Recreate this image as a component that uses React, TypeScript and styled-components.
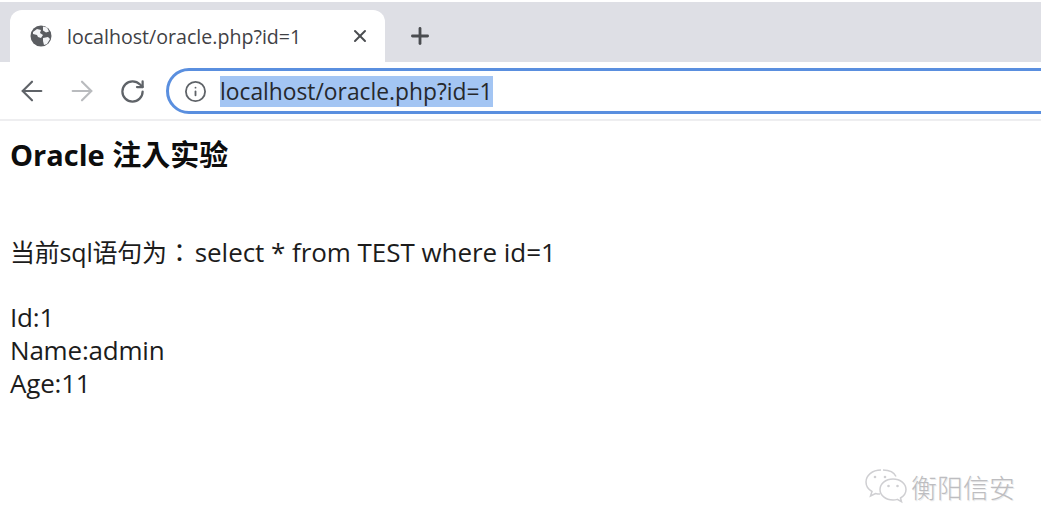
import React from 'react';
import styled, { createGlobalStyle } from 'styled-components';
import { ArrowLeft, ArrowRight, Info, Plus, RotateCw, X } from 'lucide-react';

const GlobalStyle = createGlobalStyle`
  html, body {
    margin: 0;
    padding: 0;
    background: #fff;
    overflow: hidden;
  }
  body {
    font-family: "Open Sans", "Noto Sans CJK TC", sans-serif;
  }
`;

const GlobeIcon = () => (
  <svg width="22" height="22" viewBox="0 0 22 22">
    <circle cx="11" cy="11" r="10.5" fill="#5b5d61" />
    <path
      d="M3 7l4-3 4 1-1 3 3 2-2 3-3-1-1-2-4-1zM13 1.500l4 1 2 4-3 1-3-2zM13 13l5-1 2 2-3 5-3 1-1-4z"
      fill="#f4f5f7"
    />
  </svg>
);

const WeChatIcon = () => (
  <svg width="44" height="38" viewBox="0 0 44 38" fill="none" stroke="#cfcfd2" strokeWidth="1.5">
    <path d="M17 2C8 2 2 7.500 2 14c0 4 2.500 7.500 6 9.500L6.500 28l5-2.500c1.500.4 3 .6 4.500.6" />
    <path d="M32 8.500c-1.800-4-7-6.500-13-6.500" />
    <path d="M29 11c-7.500 0-13 4.800-13 10.500S21.500 32 29 32c1.500 0 3-.2 4.300-.6l4.200 2.300-1-3.700c3.500-2 5.500-5 5.500-8.500C42 15.800 36.500 11 29 11z" />
    <circle cx="11" cy="9" r="1.300" fill="#cfcfd2" stroke="none" />
    <circle cx="21" cy="9" r="1.300" fill="#cfcfd2" stroke="none" />
    <circle cx="24.500" cy="18" r="1.300" fill="#cfcfd2" stroke="none" />
    <circle cx="33.500" cy="18" r="1.300" fill="#cfcfd2" stroke="none" />
  </svg>
);

const App: React.FC = () => {
  return (
    <Page>
      <GlobalStyle />
      <TabStrip>
        <Tab>
          <GlobeIcon />
          <TabTitle>localhost/oracle.php?id=1</TabTitle>
          <X size={20} strokeWidth={2.4} color="#4a4c50" />
        </Tab>
        <NewTab>
          <Plus size={26} strokeWidth={2.6} color="#4a4c50" />
        </NewTab>
      </TabStrip>
      <Toolbar>
        <NavButtons>
          <ArrowLeft size={32} strokeWidth={1.6} color="#5f6368" />
          <ArrowRight size={32} strokeWidth={1.6} color="#b9bbbe" />
          <ReloadIcon size={27} strokeWidth={2} color="#5f6368" />
        </NavButtons>
        <Omnibox>
          <Info size={23} strokeWidth={1.9} color="#5f6368" />
          <Url>localhost/oracle.php?id=1</Url>
        </Omnibox>
      </Toolbar>
      <Content>
        <Heading>Oracle 注入实验</Heading>
        <Query>
          <QueryLabel>当前sql语句为：</QueryLabel>select * from TEST where id=1
        </Query>
        <Result>
          <div>Id:1</div>
          <div>Name:admin</div>
          <div>Age:11</div>
        </Result>
      </Content>
      <Watermark>
        <WeChatIcon />
        <WatermarkText>衡阳信安</WatermarkText>
      </Watermark>
    </Page>
  );
};

const Page = styled.div`
  position: relative;
  box-sizing: border-box;
  width: 1041px;
  height: 511px;
  padding-top: 2px;
  overflow: hidden;
  background: #fff;
  color: #111;
`;

const TabStrip = styled.div`
  display: flex;
  align-items: flex-end;
  height: 60px;
  padding-left: 10px;
  background: #dedfe5;
`;

const Tab = styled.div`
  display: flex;
  align-items: center;
  box-sizing: border-box;
  width: 375px;
  height: 52px;
  padding: 0 15px 0 20px;
  background: #fff;
  border-radius: 12px 12px 0 0;
`;

const TabTitle = styled.span`
  flex: 1;
  margin-left: 15px;
  font-size: 19.6px;
  color: #3f4145;
  white-space: nowrap;
`;

const NewTab = styled.div`
  display: flex;
  align-items: center;
  justify-content: center;
  width: 26px;
  height: 52px;
  margin-left: 22px;
`;

const Toolbar = styled.div`
  display: flex;
  align-items: center;
  box-sizing: border-box;
  height: 59px;
  padding: 1px 0 0 16px;
  border-bottom: 2px solid #eeeef0;
  background: #fff;
`;

const NavButtons = styled.div`
  display: flex;
  flex: none;
  align-items: center;
  gap: 18px;
  width: 150px;
`;

const ReloadIcon = styled(RotateCw)`
  margin-left: 3px;
`;

const Omnibox = styled.div`
  display: flex;
  align-items: center;
  flex: none;
  box-sizing: border-box;
  width: 920px;
  height: 46px;
  padding-left: 15px;
  border: 3px solid #5a8fdf;
  border-radius: 23px;
`;

const Url = styled.span`
  margin-left: 13px;
  line-height: 31px;
  font-size: 22.8px;
  color: #26282c;
  background: #a3c5f3;
  white-space: nowrap;
`;

const Content = styled.main`
  padding: 15px 0 0 10px;
  font-size: 26px;
  line-height: 33px;
`;

const Heading = styled.h1`
  margin: 0;
  font-size: 29px;
  line-height: 38px;
  font-weight: 700;
  color: #0d0d0d;
`;

const Query = styled.p`
  margin: 62px 0 0;
  letter-spacing: -0.05px;
  color: #1c1c1c;
`;

const QueryLabel = styled.span`
  margin-right: 3px;
  font-size: 25px;
  letter-spacing: -0.2px;
`;

const Result = styled.div`
  margin-top: 32px;
  letter-spacing: -0.2px;
  color: #1c1c1c;
`;

const Watermark = styled.div`
  position: absolute;
  left: 864px;
  top: 468px;
  display: flex;
  align-items: center;
  gap: 3px;
`;

const WatermarkText = styled.span`
  font-size: 26px;
  font-weight: 300;
  color: #bdbdc0;
  text-shadow: 1px 1px 0 #ececec;
  white-space: nowrap;
`;

export default App;
